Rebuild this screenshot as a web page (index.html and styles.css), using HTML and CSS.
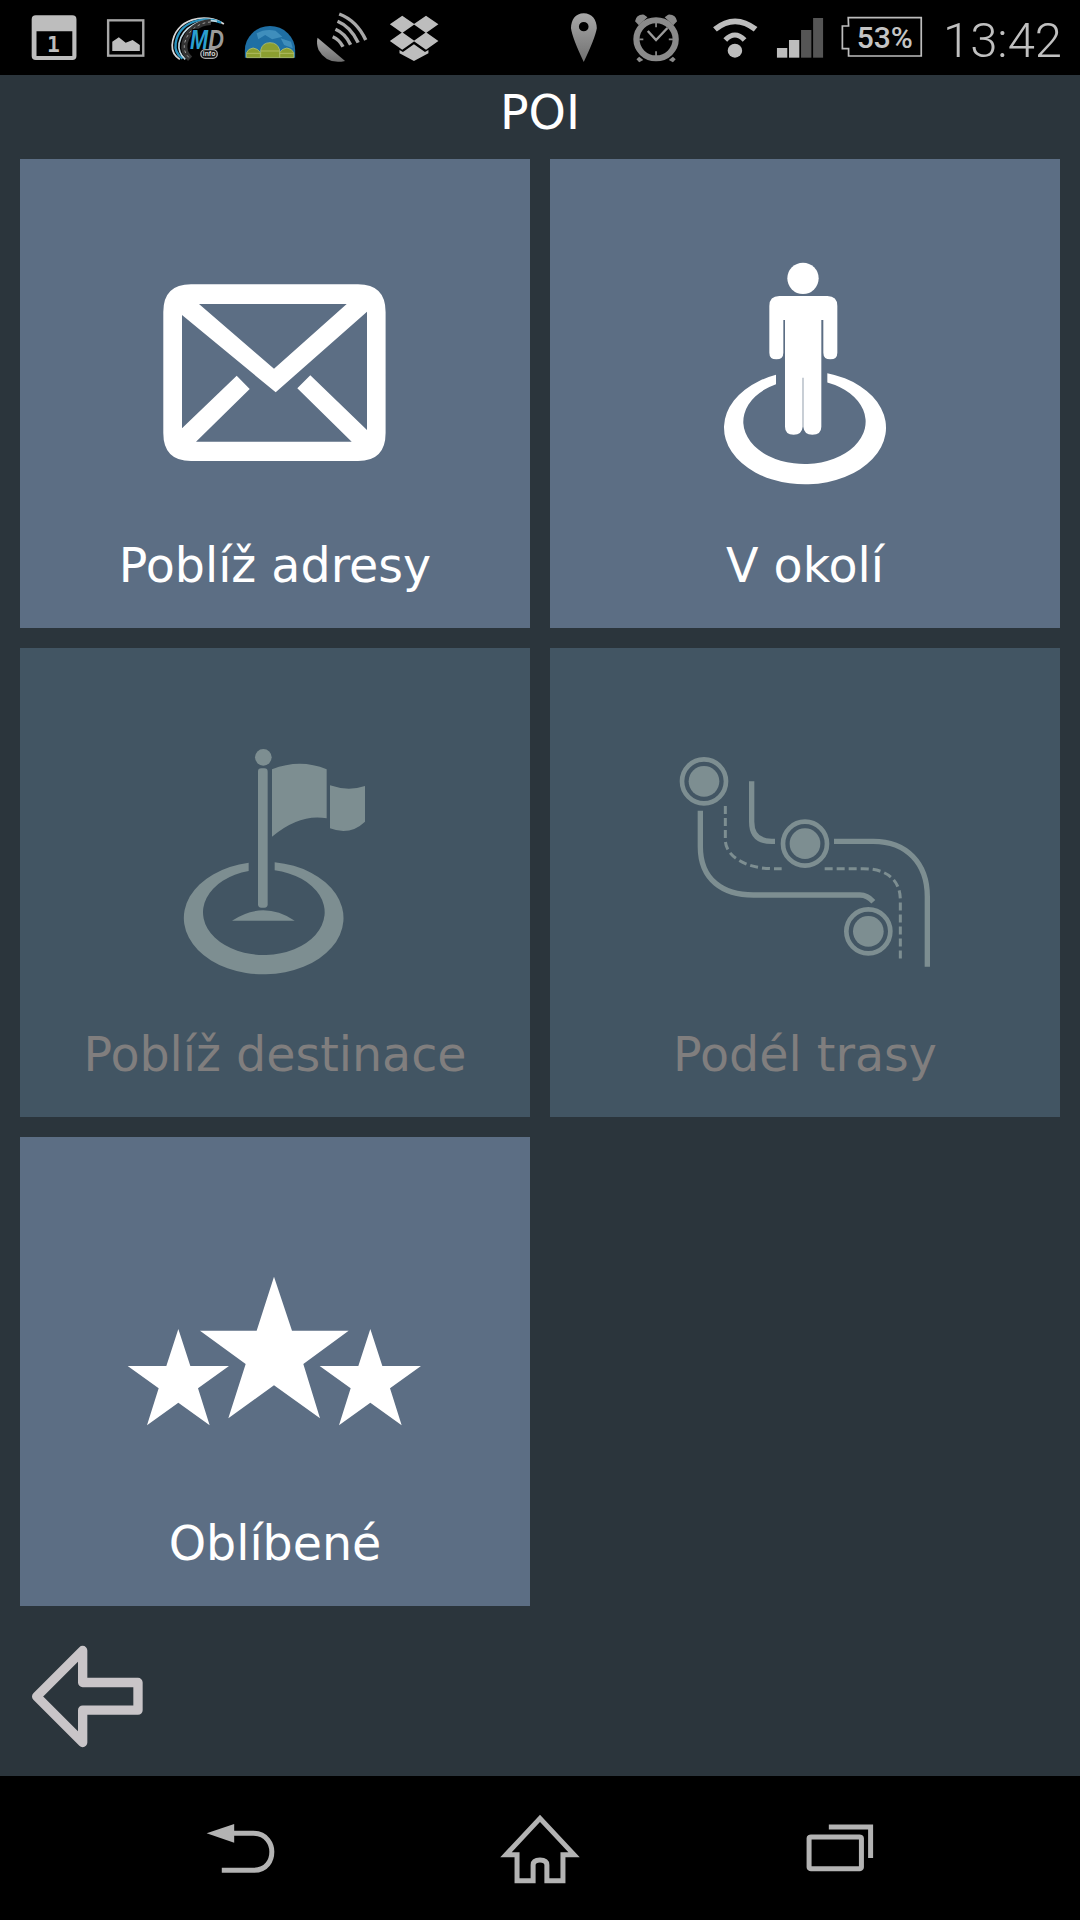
FILE: index.html
```html
<!DOCTYPE html>
<html lang="cs">
<head>
<meta charset="utf-8">
<title>POI</title>
<link rel="stylesheet" href="styles.css">
</head>
<body>
<div class="app">
  <header class="status">
    <svg class="status-left" viewBox="0 0 460 75" width="460" height="75">
      <defs>
        <linearGradient id="fade" x1="0" y1="0" x2="0" y2="1">
          <stop class="fade-top" offset="0"/>
          <stop class="fade-bottom" offset="1"/>
        </linearGradient>
      </defs>
      <g transform="scale(.34439 .33333)">
        <path class="si" fill-rule="evenodd" d="M104 46H210Q222 46 222 58V168Q222 180 210 180H104Q92 180 92 168V58Q92 46 104 46ZM106 94V168H210V94Z"/>
        <text class="cal-num" x="155" y="156" text-anchor="middle">1</text>
        <rect class="si-line" x="314" y="61" width="102" height="106"/>
        <path class="si" d="M326 153V125L345 112L365 128L385 120L406 135V153Z"/>
        <g class="md">
          <path class="sw-a" d="M650 72C600 35 505 55 500 135C499 155 510 170 522 178"/>
          <path class="sw-b" d="M642 68C590 45 520 65 510 130C507 150 515 165 530 176"/>
          <path class="sw-c" d="M630 64C585 55 530 78 520 130C517 150 524 165 538 178"/>
          <path class="sw-d" d="M612 66C575 68 545 92 536 130C532 150 540 165 552 176"/>
          <path class="sw-e" d="M612 66C575 68 545 92 536 130C532 150 540 165 552 176"/>
          <text class="md-text" x="552" y="146" textLength="98" lengthAdjust="spacingAndGlyphs"><tspan class="md-m">M</tspan><tspan class="md-d">D</tspan></text>
          <rect class="md-pill" x="583" y="149" width="48" height="26" rx="13"/>
          <text class="md-info" x="607" y="168" text-anchor="middle">info</text>
        </g>
        <path class="globe" d="M711 173V151A73 73 0 0 1 857 151V173Z"/>
        <path class="globe-land" d="M745 100Q770 85 800 92L820 110L790 118L770 105L750 118ZM815 115L845 125L850 145L825 135Z"/>
        <path class="droid" d="M716 173V158Q720 146 735 144Q750 146 756 158V173ZM812 173V158Q818 146 833 144Q848 146 853 158V173Z"/>
        <path class="droid" d="M757 173V150Q762 128 784 128Q806 128 812 150V173Z"/>
        <path class="droid-line" d="M757 153H812M716 160H756M812 160H853"/>
        <path class="pin-grad" d="M922 113L1002 183Q950 195 925 150Q918 130 922 113Z"/>
        <path class="arc" d="M966 110Q985 118 996 140"/>
        <path class="arc" d="M974 88Q1002 100 1018 134"/>
        <path class="arc" d="M980 64Q1018 80 1040 128"/>
        <path class="arc" d="M985 42Q1036 62 1062 120"/>
        <path class="si" d="M1168 47L1204 73L1168 99L1132 73ZM1237 47L1273 73L1237 99L1201 73ZM1168 97L1204 123L1168 149L1132 123ZM1237 97L1273 123L1237 149L1201 123ZM1160 150L1170 156L1202 133L1234 156L1244 150V160L1202 183L1160 160Z"/>
      </g>
    </svg>
    <svg class="status-right" viewBox="540 0 540 75" width="540" height="75">
      <defs>
        <linearGradient id="pinfade" x1="0" y1="0" x2="0" y2="1">
          <stop class="fade-top" offset="0"/>
          <stop class="fade-bottom" offset="1"/>
        </linearGradient>
      </defs>
      <g transform="translate(540 0) scale(.34439 .33333)">
        <path class="pin-grad-r" fill-rule="evenodd" d="M127 40C103 40 90 60 90 85Q94 115 127 186Q160 115 165 85C165 60 151 40 127 40ZM127 66A14 14 0 1 1 127 94A14 14 0 1 1 127 66Z"/>
        <circle class="clock" cx="337" cy="118" r="57"/>
        <path class="si-mid" d="M276 64Q280 42 302 44L312 52L287 76ZM398 64Q394 42 372 44L362 52L387 76ZM288 170L300 180L288 187L280 178ZM386 170L374 180L386 187L394 178Z"/>
        <path class="tick" d="M337 68V82M337 154V168M288 118H300M374 118H386"/>
        <path class="hand" d="M313 93L337 120L370 84"/>
        <path class="wifi" d="M508 88Q566 40 626 88"/>
        <path class="wifi wifi-in" d="M538 120Q566 90 594 120"/>
        <circle class="si" cx="566" cy="152" r="21"/>
        <rect class="si" x="688" y="144" width="30" height="29"/>
        <rect class="si" x="723" y="120" width="30" height="53"/>
        <rect class="si-dark" x="758" y="90" width="30" height="83"/>
        <rect class="si-dark" x="793" y="54" width="29" height="119"/>
        <path class="batt" d="M895 53H1107V168H896V146H878V78H896Z"/>
        <text class="batt-text" x="1001" y="143" text-anchor="middle">53%</text>
      </g>
      <text class="clock-text" x="1062" y="57" text-anchor="end">13:42</text>
    </svg>
  </header>

  <main class="screen">
    <h1 class="title">POI</h1>
    <div class="tiles">
      <div class="tile">
        <svg class="tile-icon" viewBox="20 159 510 376">
          <path class="icon-fill" fill-rule="evenodd" d="M191 284.3H358Q385.6 284.3 385.6 312V433Q385.6 461 358 461H191Q163.3 461 163.3 433V312Q163.3 284.3 191 284.3ZM199 304L274 368.7L346.7 304ZM182 315V428.3L236.7 375.7L249.7 389L196 441.7H351.7L297.3 388.3L310.3 375.3L367 430V311.7L275.7 392.3Z"/>
        </svg>
        <span class="tile-label">Poblíž adresy</span>
      </div>
      <div class="tile">
        <svg class="tile-icon" viewBox="550 159 510 376">
          <g class="icon-fill" transform="translate(690 240) scale(.33333)">
            <circle cx="339" cy="115" r="47"/>
            <path d="M268 168H412Q442 168 442 198V338Q442 358 421 358Q400 358 400 338V240H394V560Q394 584 367 584Q342 584 340 560V413H338V560Q336 584 311 584Q285 584 285 560V240H280V338Q280 358 259 358Q238 358 238 338V198Q238 168 268 168Z"/>
            <path d="M258 404.3A243 170 0 1 0 412 399.6V427.2A183.5 127 0 1 1 258 432.6Z"/>
          </g>
        </svg>
        <span class="tile-label">V okolí</span>
      </div>
      <div class="tile tile-off">
        <svg class="tile-icon" viewBox="20 648 510 376">
          <g class="icon-dim" transform="translate(160 730) scale(.33333)">
            <circle cx="310" cy="82" r="25"/>
            <rect x="294" y="115" width="29" height="418" rx="10"/>
            <path d="M336 118Q420 85 500 118V265Q420 250 336 320Z"/>
            <path d="M510 166Q565 185 615 168V275Q570 318 510 295Z"/>
            <path d="M216 572Q310 510 404 572Z"/>
            <path d="M266 398A239.5 169 0 1 0 344 396.6V421A182.5 128 0 1 1 266 423Z"/>
          </g>
        </svg>
        <span class="tile-label">Poblíž destinace</span>
      </div>
      <div class="tile tile-off">
        <svg class="tile-icon" viewBox="550 648 510 376">
          <g transform="translate(660 740) scale(.33333)">
            <circle class="node-ring" cx="132" cy="124" r="66"/>
            <circle class="icon-dim" cx="132" cy="124" r="46"/>
            <circle class="node-ring" cx="435" cy="311" r="66"/>
            <circle class="icon-dim" cx="435" cy="311" r="46"/>
            <circle class="node-ring" cx="625" cy="574" r="66"/>
            <circle class="icon-dim" cx="625" cy="574" r="46"/>
            <path class="route" d="M121 212V320C121 420 190 465 280 465H600Q622 465 640 485"/>
            <path class="route" d="M275 124V245Q275 304 335 304H345"/>
            <path class="route" d="M522 304H640C740 304 802 370 802 470V680"/>
            <path class="route-dash" d="M196 198V300C196 350 260 386 340 386H365"/>
            <path class="route-dash" d="M494 386H610C680 386 721 420 721 480V660"/>
          </g>
        </svg>
        <span class="tile-label">Podél trasy</span>
      </div>
      <div class="tile">
        <svg class="tile-icon" viewBox="20 1137 510 376">
          <g class="icon-fill" transform="translate(110 1260) scale(.33333)">
            <polygon points="492,50 546,212 716,212 580,312 630,475 492,376 355,475 407,312 270,212 440,212"/>
            <polygon points="205,207 241,318 357,318 264,385 299,496 205,428 111,496 146,385 53,318 169,318"/>
            <polygon points="781,207 817,318 933,318 840,385 875,496 781,428 687,496 722,385 629,318 745,318"/>
          </g>
        </svg>
        <span class="tile-label">Oblíbené</span>
      </div>
    </div>
    <div class="toolbar">
      <svg class="back-icon" viewBox="0 1605.5 180 170" width="180" height="170">
        <path class="back-path" transform="translate(0 1620) scale(.33333)" d="M110 228L248 90V186H414V269H248V366Z"/>
      </svg>
    </div>
  </main>

  <nav class="navbar">
    <svg class="nav-icons" viewBox="0 1776 1080 144" width="1080" height="144">
      <g transform="translate(180 1770) scale(.45918 .33333)">
        <polygon class="nav-fill" points="58,190 118,162 118,218"/>
        <path class="nav-line" d="M112 190H160C190 190 200 225 200 245C200 270 190 301 160 301H91"/>
        <path class="nav-line" d="M784 145L710 254H734V332H769V285Q769 270 784 270Q799 270 799 285V332H834V254H858Z"/>
        <rect class="nav-line" x="1370" y="201" width="114" height="95" rx="4"/>
        <path class="nav-line" d="M1413 171H1504V264"/>
      </g>
    </svg>
  </nav>
</div>
</body>
</html>
```
FILE: styles.css
```css
* { box-sizing: border-box; }
html, body { margin: 0; padding: 0; background: #000; }
.app { width: 1080px; height: 1920px; display: flex; flex-direction: column; overflow: hidden; }

.status { height: 75px; background: #000; display: flex; justify-content: space-between; flex: none; }
.status svg { display: block; }
.si { fill: #bdbdbd; }
.si-mid { fill: #8a8a8a; }
.si-dark { fill: #555; }
.si-line { fill: none; stroke: #a8a8a8; stroke-width: 7; }
.cal-num { font: 700 62px "DejaVu Sans Mono", monospace; fill: #bdbdbd; }
.arc { fill: none; stroke: #a8a8a8; stroke-width: 10; }
.pin-grad { fill: url(#fade); }
.pin-grad-r { fill: url(#pinfade); }
.fade-top { stop-color: #a8a8a8; }
.fade-bottom { stop-color: #707070; }
.clock { fill: none; stroke: #8a8a8a; stroke-width: 18; }
.tick { stroke: #8a8a8a; stroke-width: 5; fill: none; }
.hand { stroke: #9a9a9a; stroke-width: 7; fill: none; }
.wifi { fill: none; stroke: #bdbdbd; stroke-width: 17; }
.wifi-in { stroke-width: 15; }
.batt { fill: none; stroke: #bdbdbd; stroke-width: 5; }
.batt-text { font: 500 87px "Roboto", sans-serif; fill: #c4c4c4; }
.clock-text { font: 300 49px "Roboto", sans-serif; fill: #c0c0c0; }
.sw-a { fill: none; stroke: #d8d8d8; stroke-width: 5; }
.sw-b { fill: none; stroke: #2a94c0; stroke-width: 7; }
.sw-c { fill: none; stroke: #bfd8e2; stroke-width: 5; }
.sw-d { fill: none; stroke: #333; stroke-width: 18; }
.sw-e { fill: none; stroke: #ccc; stroke-width: 2; stroke-dasharray: 8 8; }
.md-text { font: italic 700 82px "Liberation Sans", sans-serif; paint-order: stroke; stroke: #000; stroke-width: 8; }
.md-m { fill: #2a9fd0; }
.md-d { fill: #9a9a9a; }
.md-pill { fill: #111; stroke: #aaa; stroke-width: 4; }
.md-info { font: 700 20px "Liberation Sans", sans-serif; fill: #ddd; }
.globe { fill: #1f6fa4; }
.globe-land { fill: #3f8ebc; }
.droid { fill: #8b9e30; stroke: #c0cb78; stroke-width: 2; }
.droid-line { fill: none; stroke: #c0cb78; stroke-width: 2; }

.screen { flex: 1; background: #2b353c; display: flex; flex-direction: column; }
.title { margin: 0; height: 84px; text-align: center; color: #fff; font: 400 47.5px/76px "DejaVu Sans", sans-serif; flex: none; }
.tiles { display: grid; grid-template-columns: 510px 510px; grid-auto-rows: 468.5px; gap: 20.5px 20px; padding: 0 20px; }
.tile { background: #5c6e84; display: flex; flex-direction: column; align-items: center; }
.tile-off { background: #425563; }
.tile-icon { display: block; width: 510px; height: 376px; flex: none; }
.tile-label { height: 62px; line-height: 62px; color: #fff; font-family: "DejaVu Sans", sans-serif; font-size: 47.5px; white-space: nowrap; }
.tile-off .tile-label { color: #807e7e; }
.icon-fill { fill: #fff; }
.icon-dim { fill: #7d8e91; }
.node-ring { fill: none; stroke: #7d8e91; stroke-width: 14; }
.route { fill: none; stroke: #7d8e91; stroke-width: 16; }
.route-dash { fill: none; stroke: #7d8e91; stroke-width: 9; stroke-dasharray: 24 12; }

.toolbar { flex: 1; }
.back-icon { display: block; }
.back-path { fill: none; stroke: #c9c5c8; stroke-width: 28; stroke-linejoin: round; }

.navbar { height: 144px; background: #000; flex: none; }
.nav-icons { display: block; }
.nav-fill { fill: #b3b3b3; }
.nav-line { fill: none; stroke: #b3b3b3; stroke-width: 5; vector-effect: non-scaling-stroke; }
```
